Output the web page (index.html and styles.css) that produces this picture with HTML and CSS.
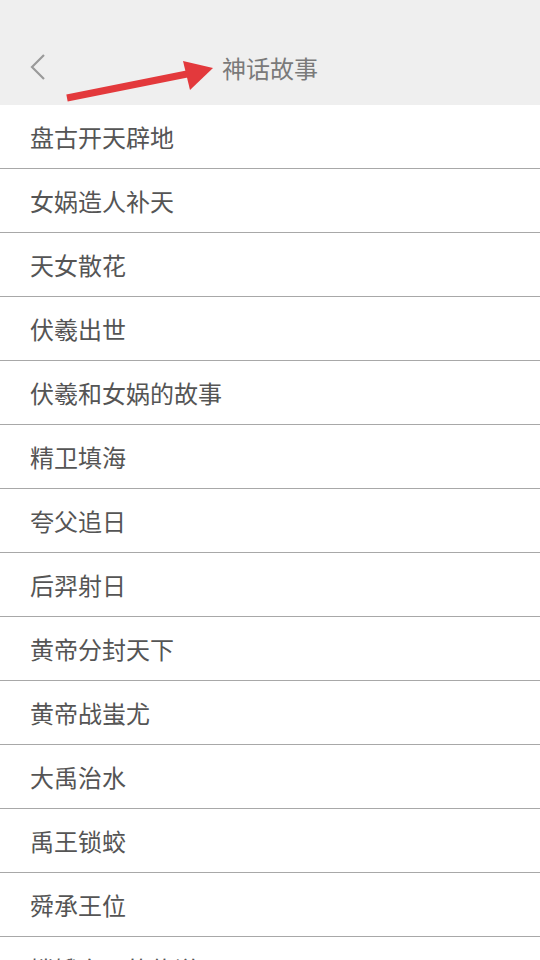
FILE: index.html
```html
<!DOCTYPE html>
<html lang="zh">
<head>
<meta charset="utf-8">
<link rel="stylesheet" href="styles.css">
</head>
<body>
<header class="topbar">
  <div class="back">
    <svg width="16" height="26" viewBox="0 0 16 26"><path d="M14 1 L2 13 L14 25" fill="none" stroke="#9a9a9a" stroke-width="2.2"/></svg>
  </div>
  <h1 class="title">神话故事</h1>
  <svg class="arrow" width="540" height="105" viewBox="0 0 540 105">
    <line x1="67" y1="98" x2="192" y2="73" stroke="#e3393c" stroke-width="7"/>
    <polygon points="213,68 183,61 190,90" fill="#e3393c"/>
  </svg>
</header>
<ul class="list">
  <li>盘古开天辟地</li>
  <li>女娲造人补天</li>
  <li>天女散花</li>
  <li>伏羲出世</li>
  <li>伏羲和女娲的故事</li>
  <li>精卫填海</li>
  <li>夸父追日</li>
  <li>后羿射日</li>
  <li>黄帝分封天下</li>
  <li>黄帝战蚩尤</li>
  <li>大禹治水</li>
  <li>禹王锁蛟</li>
  <li>舜承王位</li>
  <li>嫦娥奔月的传说</li>
</ul>
</body>
</html>
```
FILE: styles.css
```css
html, body {
  margin: 0;
  padding: 0;
  background: #ffffff;
  overflow: hidden;
  height: 960px;
}
body {
  font-family: "Noto Sans CJK SC", "Noto Sans", sans-serif;
  width: 540px;
}
.topbar {
  position: relative;
  height: 105px;
  background: #efefef;
  display: flex;
  align-items: flex-end;
  justify-content: center;
  padding-bottom: 19px;
  box-sizing: border-box;
}
.back {
  position: absolute;
  left: 30px;
  top: 54px;
}
.title {
  margin: 0;
  font-size: 24px;
  font-weight: 400;
  color: #7a7a7a;
  line-height: 36px;
}
.arrow {
  position: absolute;
  left: 0;
  top: 0;
}
.list {
  list-style: none;
  margin: 0;
  padding: 0;
}
.list li {
  height: 63px;
  border-bottom: 1px solid #a8a8a8;
  padding-left: 30px;
  display: flex;
  align-items: center;
  font-size: 24px;
  color: #555555;
}
```
